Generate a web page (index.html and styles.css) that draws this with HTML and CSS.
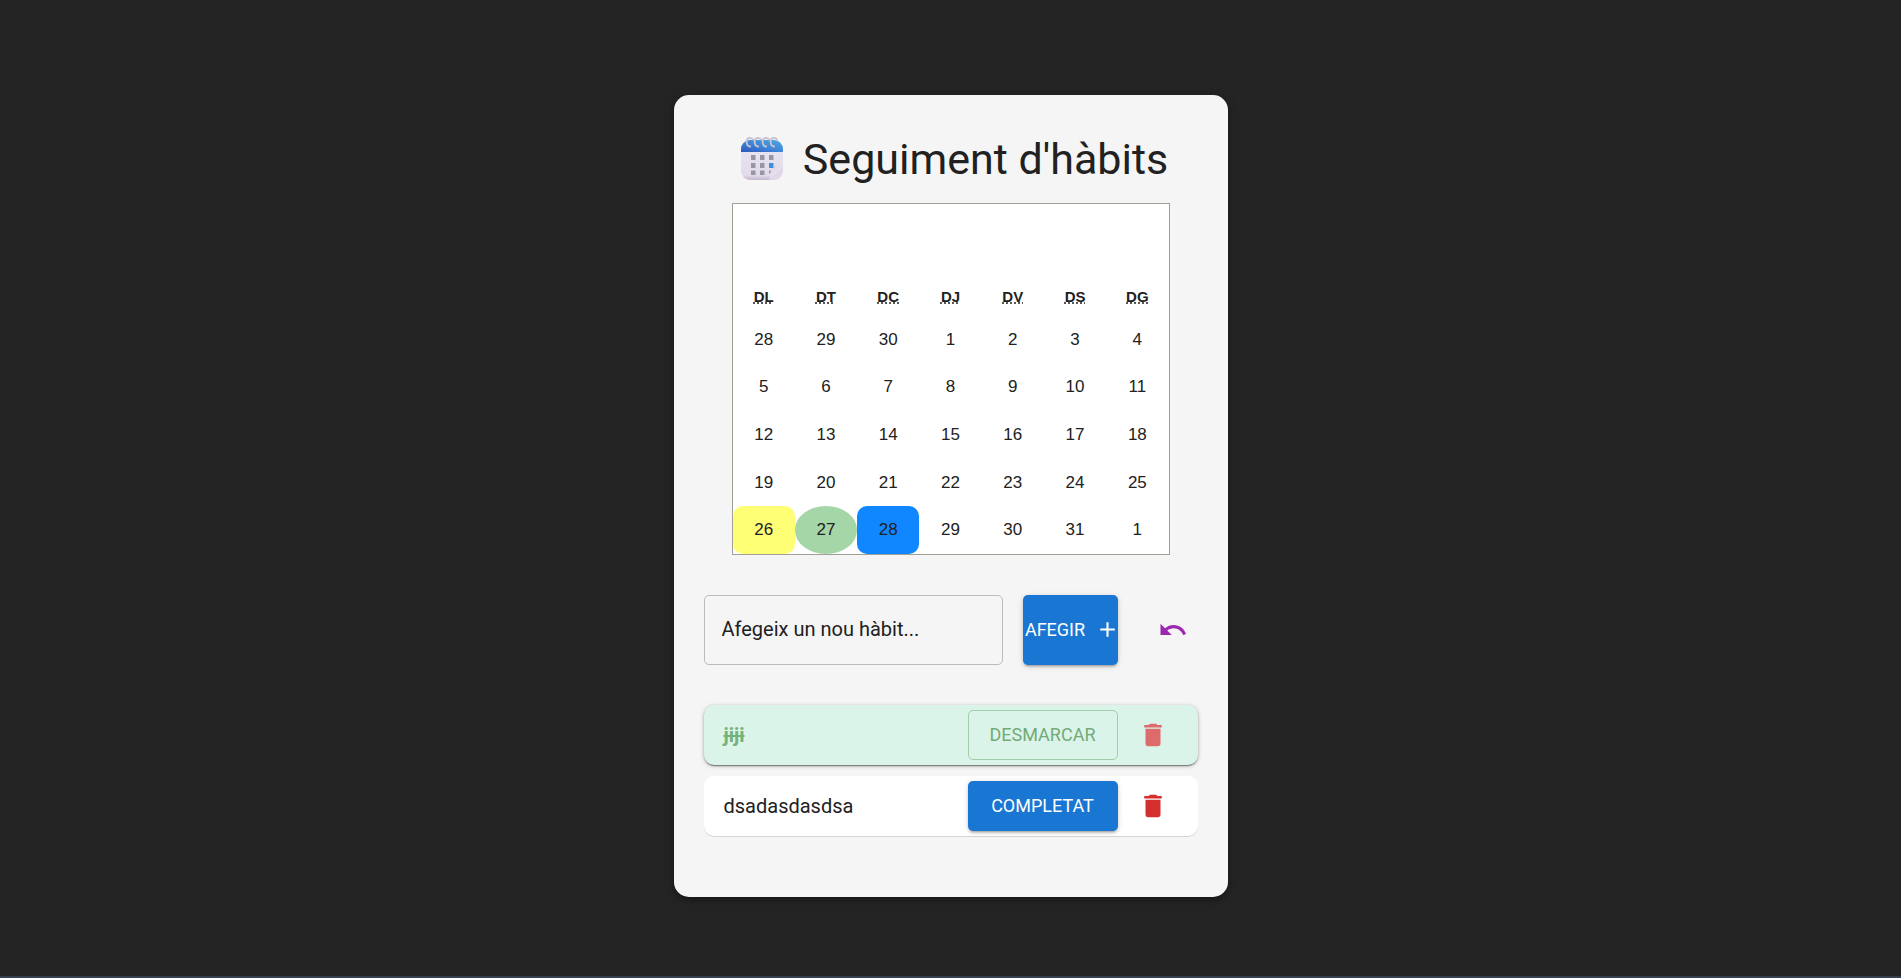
FILE: index.html
```html
<!DOCTYPE html>
<html lang="ca">
<head>
<meta charset="utf-8">
<meta name="viewport" content="width=device-width, initial-scale=1">
<title>Seguiment d'hàbits</title>
<link rel="stylesheet" href="styles.css">
</head>
<body>
<main class="card">
  <h1 class="title">
    <svg class="title-icon" viewBox="0 0 42 44" aria-hidden="true">
      <defs>
        <linearGradient id="head" x1="0" x2="1" y1="1" y2="0"><stop offset="0" stop-color="#2f56bd"/><stop offset=".5" stop-color="#3f86d8"/><stop offset="1" stop-color="#4fa9e4"/></linearGradient>
        <linearGradient id="page" x1="0" x2="0" y1="0" y2="1"><stop offset="0" stop-color="#e9e4f1"/><stop offset=".85" stop-color="#e2dbe9"/><stop offset="1" stop-color="#c3b6cf"/></linearGradient>
        <linearGradient id="curl" x1="0" x2="1" y1="0" y2="1"><stop offset="0" stop-color="#cfc5da"/><stop offset=".5" stop-color="#e9e4f0"/><stop offset="1" stop-color="#d6cede"/></linearGradient>
      </defs>
      <path fill="url(#page)" d="M0 12h42v17L29 43H9a9 9 0 0 1-9-9z"/>
      <path fill="#dfd8e7" d="M42 29v5a9 9 0 0 1-9 9h-5z"/>
      <path fill="url(#curl)" d="M42 28c-4 2-9 1-10 2-2 2 0 8-4 13z"/>
      <path fill="url(#head)" d="M9 3h24a9 9 0 0 1 9 9v3H0v-3a9 9 0 0 1 9-9z"/>
      <path fill="#9a95a4" d="M10 18h4.500v5H10zM19 18h4.500v5H19zM28 18h4.500v5H28zM10 26h4.500v5H10zM19 26h4.500v5H19zM10 33.500h4.500v4.500H10zM19 33.500h4.500v4.500H19zM28 33.500h2l-1 3h-1z"/>
      <path fill="#3f8fdf" d="M28 26h4.500v5H28z"/>
      <g fill="none" stroke="#c6c3d2" stroke-width="1.900" stroke-linecap="round"><path id="ring" d="M12 2.500C11 1 9.500.9 8.500 1 6.500 1.200 5.500 3 5.600 5c.1 2.500 1.400 4.300 3.600 4.500"/><use href="#ring" x="8"/><use href="#ring" x="16"/><use href="#ring" x="24"/></g>
    </svg>
    Seguiment d'hàbits
  </h1>

  <section class="calendar" aria-label="Calendari">
    <div class="weekdays">
      <abbr title="dilluns">DL</abbr><abbr title="dimarts">DT</abbr><abbr title="dimecres">DC</abbr><abbr title="dijous">DJ</abbr><abbr title="divendres">DV</abbr><abbr title="dissabte">DS</abbr><abbr title="diumenge">DG</abbr>
    </div>
    <div class="days">
      <button class="day">28</button><button class="day">29</button><button class="day">30</button><button class="day">1</button><button class="day">2</button><button class="day">3</button><button class="day">4</button>
      <button class="day">5</button><button class="day">6</button><button class="day">7</button><button class="day">8</button><button class="day">9</button><button class="day">10</button><button class="day">11</button>
      <button class="day">12</button><button class="day">13</button><button class="day">14</button><button class="day">15</button><button class="day">16</button><button class="day">17</button><button class="day">18</button>
      <button class="day">19</button><button class="day">20</button><button class="day">21</button><button class="day">22</button><button class="day">23</button><button class="day">24</button><button class="day">25</button>
      <button class="day day-partial">26</button><button class="day day-done">27</button><button class="day day-today">28</button><button class="day">29</button><button class="day">30</button><button class="day">31</button><button class="day">1</button>
    </div>
  </section>

  <form class="add-form">
    <input class="habit-input" type="text" placeholder="Afegeix un nou hàbit..." aria-label="Afegeix un nou hàbit">
    <button class="button button-primary button-add" type="button">AFEGIR
      <svg class="add-icon" viewBox="0 0 24 24" aria-hidden="true"><path d="M19 13h-6v6h-2v-6H5v-2h6V5h2v6h6z"/></svg>
    </button>
    <button class="icon-button undo" type="button" aria-label="Desfés">
      <svg class="icon" viewBox="0 0 24 24"><path d="M12.500 8c-2.650 0-5.050.990-6.900 2.600L2 7v9h9l-3.620-3.620c1.390-1.160 3.160-1.880 5.120-1.880 3.540 0 6.550 2.310 7.600 5.500l2.370-.780C21.080 11.030 17.150 8 12.500 8"/></svg>
    </button>
  </form>

  <ul class="habits">
    <li class="habit habit-done">
      <span class="habit-name">jiji</span>
      <button class="button button-outlined" type="button">DESMARCAR</button>
      <button class="icon-button delete" type="button" aria-label="Elimina jiji">
        <svg class="icon" viewBox="0 0 24 24"><path d="M6 19c0 1.100.9 2 2 2h8c1.100 0 2-.9 2-2V7H6zM19 4h-3.500l-1-1h-5l-1 1H5v2h14z"/></svg>
      </button>
    </li>
    <li class="habit">
      <span class="habit-name">dsadasdasdsa</span>
      <button class="button button-primary" type="button">COMPLETAT</button>
      <button class="icon-button delete" type="button" aria-label="Elimina dsadasdasdsa">
        <svg class="icon" viewBox="0 0 24 24"><path d="M6 19c0 1.100.9 2 2 2h8c1.100 0 2-.9 2-2V7H6zM19 4h-3.500l-1-1h-5l-1 1H5v2h14z"/></svg>
      </button>
    </li>
  </ul>
</main>
</body>
</html>
```
FILE: styles.css
```css
*, *::before, *::after { box-sizing: border-box; }

body {
  margin: 0;
  min-height: 100vh;
  display: flex;
  flex-direction: column;
  align-items: center;
  padding: 95px 20px 78px;
  border-bottom: 2px solid #343e50;
  background: #242424;
  color: #212121;
  font-family: Roboto, "Liberation Sans", sans-serif;
}

button { margin: 0; border: 0; padding: 0; background: none; color: inherit; cursor: pointer; }

.card {
  width: 100%;
  max-width: 554px;
  padding: 38px 30px 61px;
  border-radius: 15px;
  background: #f5f5f5;
  box-shadow: 0 3px 4px rgba(0, 0, 0, .2), 0 2px 12px rgba(0, 0, 0, .24);
}

.title {
  display: flex;
  justify-content: center;
  align-items: center;
  gap: 20px;
  margin: 0 0 18px;
  padding-left: 8px;
  font-size: 43px;
  font-weight: 400;
  line-height: 52px;
}

.title-icon { width: 42px; height: 44px; flex: none; }

.calendar {
  max-width: 438px;
  margin: 0 auto;
  padding-top: 75px;
  border: 1px solid #a0a096;
  background: #fff;
  font-family: "Liberation Sans", Arial, sans-serif;
}

.weekdays, .days { display: grid; grid-template-columns: repeat(7, 1fr); }

.weekdays {
  padding: 9px 0 11px;
  font-size: 15px;
  font-weight: 700;
  line-height: 17px;
  text-align: center;
}

.weekdays abbr { text-decoration: underline dotted; }

.days { min-height: 238px; grid-auto-rows: 1fr; }

.day {
  font-family: inherit;
  font-size: 17px;
}

.day-partial { border-radius: 10px; background: #ffff76; }
.day-done { border-radius: 50%; background: #a5d6a7; }
.day-today { border-radius: 10px; background: #1087ff; }

.add-form { display: flex; align-items: center; margin: 40px 0; }

.habit-input {
  flex: 1;
  min-width: 0;
  height: 70px;
  margin-right: 20px;
  padding: 0 17px 2px;
  border: 1px solid #bbb;
  border-radius: 5px;
  background: transparent;
  color: #212121;
  font-family: inherit;
  font-size: 20px;
}

.habit-input::placeholder { color: #212121; opacity: 1; }

.button {
  display: flex;
  justify-content: center;
  align-items: center;
  width: 150px;
  height: 50px;
  padding-bottom: 2px;
  border-radius: 5px;
  font-family: inherit;
  font-size: 18px;
  font-weight: 400;
}

.button-primary {
  background: #1976d2;
  color: #fff;
  box-shadow: 0 3px 2px -2px rgba(0, 0, 0, .2), 0 2px 3px rgba(0, 0, 0, .14), 0 1px 6px rgba(0, 0, 0, .12);
}

.button-outlined { border: 1px solid #a0cfa9; color: #73aa77; }

.button-add { width: 95px; height: 70px; gap: 10px; }

.add-icon { width: 25px; height: 25px; flex: none; margin-right: -5px; fill: currentColor; }

.icon { display: block; width: 30px; height: 30px; fill: currentColor; }

.icon-button { padding: 10px; border-radius: 50%; }

.undo { margin: 0 0 0 30px; color: #9c27b0; }

.delete { margin: 0 10px; color: #d32f2f; }

.habits { display: flex; flex-direction: column; gap: 11px; margin: 0; padding: 0; list-style: none; }

.habit {
  display: flex;
  align-items: center;
  height: 60px;
  padding: 0 10px 0 20px;
  border-radius: 10px;
  background: #fff;
  box-shadow: 0 1px 0 #d4d6d6;
}

.habit-name { flex: 1; font-size: 20px; }

.habit-done { background: #dbf4ea; box-shadow: 0 2px 1px -1px rgba(0, 0, 0, .3), 0 1px 2px rgba(0, 0, 0, .25), 0 1px 5px rgba(0, 0, 0, .2); }
.habit-done .habit-name { color: #73b27a; font-weight: 700; text-decoration: line-through; }
.habit-done .delete { color: #dd6b6b; }
```
